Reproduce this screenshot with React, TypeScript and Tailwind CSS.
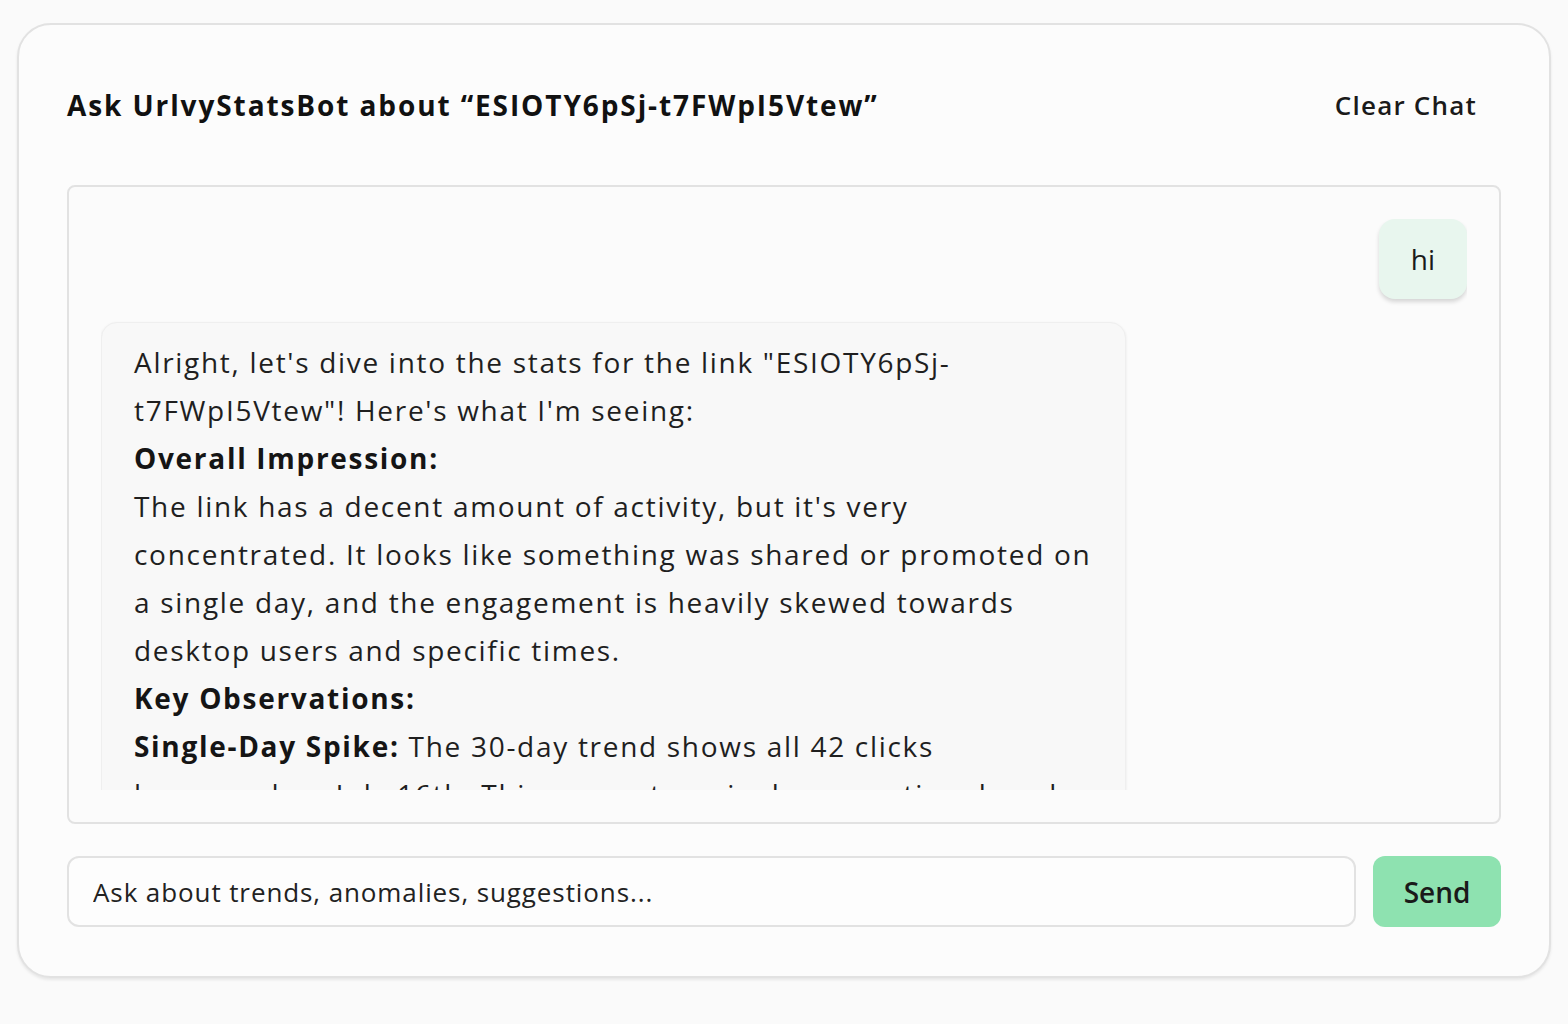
import React from "react";
import type { FC } from "react";

const font = { fontFamily: "'Open Sans', 'Noto Sans', sans-serif" };

const Bold: FC<{ children: React.ReactNode }> = ({ children }) => (
  <span className="font-bold text-[#151515]">{children}</span>
);

const App: FC = () => {
  return (
    <div className="min-h-screen bg-[#fafafa] px-[17px] pt-[23px]" style={font}>
      <div className="flex h-[955px] flex-col rounded-[34px] border-2 border-[#e2e2e2] bg-[#fcfcfc] px-[48px] pt-[56px] shadow-[0_2px_3px_rgba(0,0,0,0.08)]">
        <div className="flex items-center justify-between pr-[24px]">
          <h1 className="text-[28px] font-bold leading-[48px] tracking-[1.9px] text-[#111]">
            Ask UrlvyStatsBot about “ESIOTY6pSj-t7FWpI5Vtew”
          </h1>
          <button className="text-[26px] font-semibold tracking-[1.2px] text-[#1a1a1a]">Clear Chat</button>
        </div>

        <div className="mt-[56px] h-[639px] rounded-[8px] border-2 border-[#e2e2e2] bg-[#fbfbfb] p-[32px]">
          <div className="flex h-full flex-col gap-[24px] overflow-hidden">
            <div className="flex justify-end">
              <div className="rounded-[16px] bg-[#e8f6ee] px-[32px] py-[16px] text-[28px] leading-[48px] text-[#1a1a1a] shadow-[0_3px_4px_rgba(0,0,0,0.15)]">
                hi
              </div>
            </div>
            <div className="flex justify-start">
              <div className="-mt-[1px] w-[75%] rounded-[16px] border border-[#efefef] bg-[#f8f8f8] px-[32px] pb-[16px] pt-[15px] text-[28px] leading-[48px] tracking-[1.7px] text-[#1f1f1f] shadow-[0_1px_3px_rgba(0,0,0,0.08)]">
                <p>
                  Alright, let's dive into the stats for the link "ESIOTY6pSj-
                  <br />
                  t7FWpI5Vtew"! Here's what I'm seeing:
                </p>
                <p><Bold>Overall Impression:</Bold></p>
                <p>
                  The link has a decent amount of activity, but it's very
                  <br />
                  concentrated. It looks like something was shared or promoted on
                  <br />
                  a single day, and the engagement is heavily skewed towards
                  <br />
                  desktop users and specific times.
                </p>
                <p><Bold>Key Observations:</Bold></p>
                <p>
                  <Bold>Single-Day Spike:</Bold> The 30-day trend shows all 42 clicks
                  <br />
                  happened on July 16th. This suggests a single promotional push
                  <br />
                  or mention rather than steady, ongoing interest.
                </p>
                <p>
                  <Bold>Device Split:</Bold> Most visitors came from desktop browsers,
                  <br />
                  with only a handful arriving on mobile devices.
                </p>
              </div>
            </div>
          </div>
        </div>

        <div className="mt-[32px] flex gap-[17px]">
          <input
            className="h-[71px] flex-1 rounded-[12px] border-2 border-[#e2e2e2] bg-[#fdfdfd] px-[24px] text-[26px] tracking-[0.9px] text-[#1a1a1a] outline-none placeholder:text-[#222]"
            placeholder="Ask about trends, anomalies, suggestions..."
          />
          <button className="h-[71px] w-[128px] rounded-[12px] bg-[#8ee2b0] text-[28px] font-semibold text-[#1a1a1a]">
            Send
          </button>
        </div>
      </div>
    </div>
  );
};

export default App;
